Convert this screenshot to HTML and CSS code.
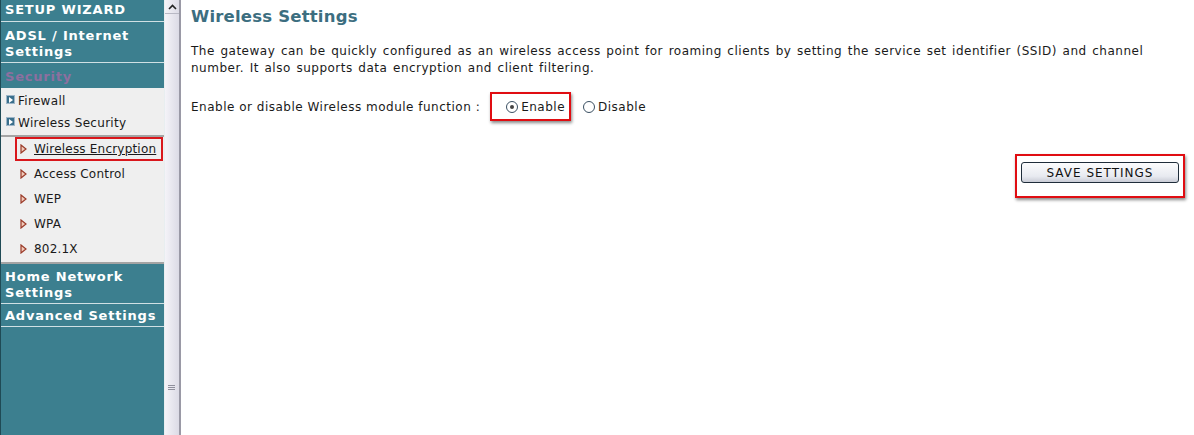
FILE: index.html
```html
<!DOCTYPE html>
<html lang="en">

<head>
    <meta charset="UTF-8">
    <title>Wireless Settings</title>
    <link rel="stylesheet" href="styles.css">
</head>

<body>
    <div id="frame">
        <div id="menu">
            <div class="head wizard">SETUP WIZARD</div>
            <div class="head adsl">ADSL / Internet Settings</div>
            <div class="head current">Security</div>
            <div class="group">
                <div class="item"><span class="box"></span>Firewall</div>
                <div class="item"><span class="box"></span>Wireless Security</div>
            </div>
            <div class="sub">
                <div class="link picked"><svg class="tri" width="7" height="10" viewBox="0 0 7 10"><path d="M1 1 L6 5 L1 9 Z" fill="#f0c9b8" stroke="#9a3a28" stroke-width="1.2"/></svg><u>Wireless Encryption</u></div>
                <div class="link"><svg class="tri" width="7" height="10" viewBox="0 0 7 10"><path d="M1 1 L6 5 L1 9 Z" fill="#f0c9b8" stroke="#9a3a28" stroke-width="1.2"/></svg>Access Control</div>
                <div class="link"><svg class="tri" width="7" height="10" viewBox="0 0 7 10"><path d="M1 1 L6 5 L1 9 Z" fill="#f0c9b8" stroke="#9a3a28" stroke-width="1.2"/></svg>WEP</div>
                <div class="link"><svg class="tri" width="7" height="10" viewBox="0 0 7 10"><path d="M1 1 L6 5 L1 9 Z" fill="#f0c9b8" stroke="#9a3a28" stroke-width="1.2"/></svg>WPA</div>
                <div class="link"><svg class="tri" width="7" height="10" viewBox="0 0 7 10"><path d="M1 1 L6 5 L1 9 Z" fill="#f0c9b8" stroke="#9a3a28" stroke-width="1.2"/></svg>802.1X</div>
            </div>
            <div class="head home">Home Network Settings</div>
            <div class="head adv">Advanced Settings</div>
        </div>
        <div id="scroll">
            <div class="arrow">
                <svg width="9" height="6" viewBox="0 0 9 6"><path d="M1 5 L4.5 1.5 L8 5" fill="none" stroke="#222" stroke-width="1.6"/></svg>
            </div>
            <div class="thumb"><span class="grip"></span></div>
        </div>
        <div id="main">
            <h1>Wireless Settings</h1>
            <p>The gateway can be quickly configured as an wireless access point for roaming clients by setting the service set identifier (SSID) and channel number. It also supports data encryption and client filtering.</p>
            <div class="row">
                <span>Enable or disable Wireless module function :</span>
                <label class="mark"><span class="radio on"></span>Enable</label>
                <label class="off"><span class="radio"></span>Disable</label>
            </div>
            <div class="save">
                <div class="mark wide"><button>SAVE SETTINGS</button></div>
            </div>
        </div>
    </div>
</body>

</html>
```

FILE: styles.css
```css
body {
    margin: 0;
    background: #fff;
    font-family: "DejaVu Sans", Verdana, sans-serif;
    font-size: 12px;
    letter-spacing: 0.5px;
    color: #1a1a1a;
}

#frame {
    display: flex;
    height: 435px;
    overflow: hidden;
}

#menu {
    width: 163px;
    background: #3c7f8f;
    border-left: 1px solid #1f4a55;
    border-right: 1px solid #e8eef0;
}

.head {
    color: #fff;
    font-weight: bold;
    font-size: 13px;
    letter-spacing: 0.8px;
    line-height: 16px;
    padding: 2px 3px 3px 4px;
    border-bottom: 1px solid #d0e0e4;
}

.head.adsl {
    padding: 6px 3px 2px 4px;
}

.head.current {
    color: #8d6f9f;
    padding: 6px 4px 3px;
    border-bottom: none;
}

.head.home {
    padding: 5px 3px 2px 4px;
}

.head.adv {
    padding: 4px 3px 2px 4px;
}

.group {
    background: #efefef;
    padding: 2px 0 1px;
    border-bottom: 2px solid #a4a4a4;
}

.item {
    display: flex;
    align-items: center;
    height: 22px;
    padding-left: 5px;
    letter-spacing: 0.3px;
}

.box {
    width: 9px;
    height: 9px;
    margin-right: 3px;
    margin-top: -4px;
    background: #3a6f8c;
    border: 1px solid #9eb6c8;
    box-sizing: border-box;
    position: relative;
}

.box::after {
    content: "";
    position: absolute;
    left: 2px;
    top: 1px;
    border-left: 4px solid #fff;
    border-top: 3px solid transparent;
    border-bottom: 3px solid transparent;
}

.sub {
    background: #efefef;
    padding: 0 0 1px;
    border-bottom: 2px solid #a4a4a4;
}

.link {
    display: flex;
    align-items: center;
    height: 25px;
    margin-left: 14px;
    padding-left: 5px;
    box-sizing: border-box;
    letter-spacing: 0.2px;
    white-space: nowrap;
}

.link.picked {
    border: 2px solid #d9171c;
    height: 24px;
    padding-left: 3px;
    margin-right: 1px;
}

.tri {
    margin-right: 7px;
}

#scroll {
    width: 14px;
    background: linear-gradient(to right, #f4f3f8, #dcdbe6);
    border-right: 2px solid #9a99a6;
    display: flex;
    flex-direction: column;
}

.arrow {
    height: 13px;
    display: flex;
    justify-content: center;
    align-items: center;
    border-bottom: 1px solid #b8b8c4;
}

.thumb {
    flex: 1;
    position: relative;
}

.grip {
    position: absolute;
    left: 3px;
    top: 371px;
    width: 7px;
    height: 6px;
    background: repeating-linear-gradient(#8f8f9c 0 1px, transparent 1px 2px);
}

#main {
    flex: 1;
    padding: 8px 9px 0 10px;
}

h1 {
    margin: 0;
    font-size: 16.5px;
    letter-spacing: 0.2px;
    color: #3c6e80;
    line-height: 18px;
}

p {
    margin: 17px 0 0;
    line-height: 17px;
    padding-right: 30px;
    word-spacing: 1.3px;
}

.row {
    display: flex;
    align-items: center;
    margin-top: 15px;
    height: 29px;
}

.row label {
    display: flex;
    align-items: center;
}

.mark {
    border: 2px solid #e00d12;
    box-shadow: 1px 2px 3px #888;
}

.row .mark {
    margin: 0 12px 0 10px;
    padding: 0 4px 0 14px;
    height: 29px;
    box-sizing: border-box;
}

.radio {
    width: 12px;
    height: 12px;
    border: 1px solid #3a4f62;
    border-radius: 50%;
    box-sizing: border-box;
    margin-right: 3px;
    background: #fff;
    position: relative;
}

.radio.on::after {
    content: "";
    position: absolute;
    left: 3px;
    top: 3px;
    width: 4px;
    height: 4px;
    border-radius: 50%;
    background: #444;
}

.save {
    display: flex;
    justify-content: flex-end;
    margin-top: 33px;
}

.wide {
    padding: 6px 4px 13px;
}

button {
    display: block;
    width: 158px;
    height: 21px;
    padding: 0;
    font-family: "DejaVu Sans", Verdana, sans-serif;
    font-size: 12px;
    letter-spacing: 1px;
    border: 1px solid #1f2d3a;
    border-radius: 3px;
    background: linear-gradient(#fcfcfd, #e8eaf0 70%, #c9ccd6);
    color: #111;
}
```
